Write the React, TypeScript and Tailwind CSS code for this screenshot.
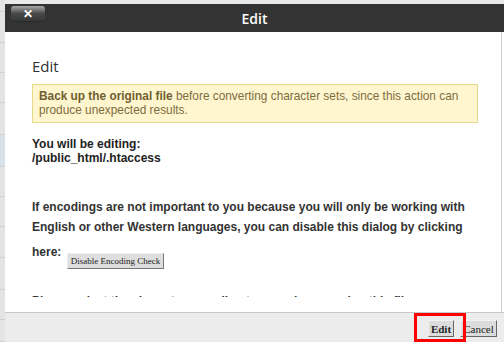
import React from 'react';

const stripRows = [
  { h: 12, blue: false },
  { h: 31, blue: false },
  { h: 30, blue: false },
  { h: 30, blue: false },
  { h: 32, blue: false },
  { h: 32, blue: true },
  { h: 30, blue: false },
  { h: 30, blue: false },
  { h: 31, blue: false },
  { h: 32, blue: false },
  { h: 30, blue: false },
  { h: 22, blue: false },
];

const App: React.FC = () => {
  return (
    <div className="relative flex h-[342px] w-[504px] overflow-hidden bg-[#e9e9e9] font-['Liberation_Sans',Arial,sans-serif] text-[#333]">
      {/* page behind the dialog */}
      <div className="flex w-[5px] shrink-0 flex-col">
        {stripRows.map((row, i) => (
          <div
            key={i}
            style={{ height: row.h }}
            className={`shrink-0 border-b border-[#d0d0d0] ${row.blue ? 'bg-[#d6e1ea]' : 'bg-[#e4e4e4]'}`}
          />
        ))}
      </div>

      {/* dialog */}
      <div className="flex min-w-0 flex-1 flex-col pt-[4px]">
        <div className="relative flex h-[28px] shrink-0 items-center justify-center bg-[#333333]">
          <span className="font-['Open_Sans',sans-serif] text-[14px] font-semibold text-white">Edit</span>
          <button className="absolute left-[6px] top-[2px] flex h-[16px] w-[34px] items-center justify-center rounded-[3px] border-b border-[#1f2b30] bg-gradient-to-b from-[#a8a8a8] via-[#4a4a4a] to-[#363636]">
            <span className="text-[12px] font-bold leading-none text-white">✕</span>
          </button>
        </div>

        <div className="flex h-[280px] shrink-0 bg-white">
          <div className="flex min-w-0 flex-1 flex-col border-r border-[#cfcfcf]">
            <div className="h-[265px] overflow-hidden pl-[27px] pr-[23px] pt-[24px]">
              <h2 className="font-['Open_Sans',sans-serif] text-[15px] leading-[20px] text-[#333]">Edit</h2>
              <div className="mt-[8px] border border-[#e6d98c] bg-[#fff6cf] px-[6px] pb-[5px] pt-[4px] text-[11.85px] leading-[14px] text-[#7d6c3e]">
                <b className="text-[#6f5e30]">Back up the original file</b> before converting character sets, since this action can produce unexpected results.
              </div>
              <p className="mt-[14px] text-[12px] font-bold leading-[14px] text-[#222]">
                You will be editing:
                <br />
                /public_html/.htaccess
              </p>
              <p className="mt-[32px] text-[12px] font-bold leading-[20px] text-[#333]">
                If encodings are not important to you because you will only be working with English or other Western languages, you can disable this dialog by clicking here:{' '}
                <button className="ml-[2px] mt-[16px] inline-block h-[16px] border border-b-[#777] border-l-[#eee] border-r-[#777] border-t-[#eee] bg-[#dedede] px-[3px] align-[-8px] font-['Liberation_Serif',serif] text-[9px] font-normal leading-[13px] text-[#222]">
                  Disable Encoding Check
                </button>
              </p>
              <p className="mt-[22px] text-[12px] font-bold leading-[20px] text-[#333]">
                Please select the character encoding to use when opening this file.
              </p>
            </div>
          </div>
          <div className="w-[2px] shrink-0" />
        </div>

        <div className="flex flex-1 items-start justify-end gap-[6px] border-t border-[#c8c8c8] bg-[#ececec] pr-[7px] pt-[7px]">
          <button className="h-[17px] w-[26px] border border-b-[#666] border-l-[#f2f2f2] border-r-[#666] border-t-[#f2f2f2] bg-[#dcdcdc] font-['Liberation_Serif',serif] text-[11px] font-bold leading-[14px] text-[#222]">
            Edit
          </button>
          <button className="h-[17px] w-[37px] border border-b-[#666] border-l-[#f2f2f2] border-r-[#666] border-t-[#f2f2f2] bg-[#dcdcdc] font-['Liberation_Serif',serif] text-[11px] leading-[14px] text-[#222]">
            Cancel
          </button>
        </div>
      </div>

      {/* red highlight around the Edit button */}
      <div className="absolute left-[414px] top-[313px] h-[29px] w-[52px] border-[3px] border-[#ff0000]" />
    </div>
  );
};

export default App;
